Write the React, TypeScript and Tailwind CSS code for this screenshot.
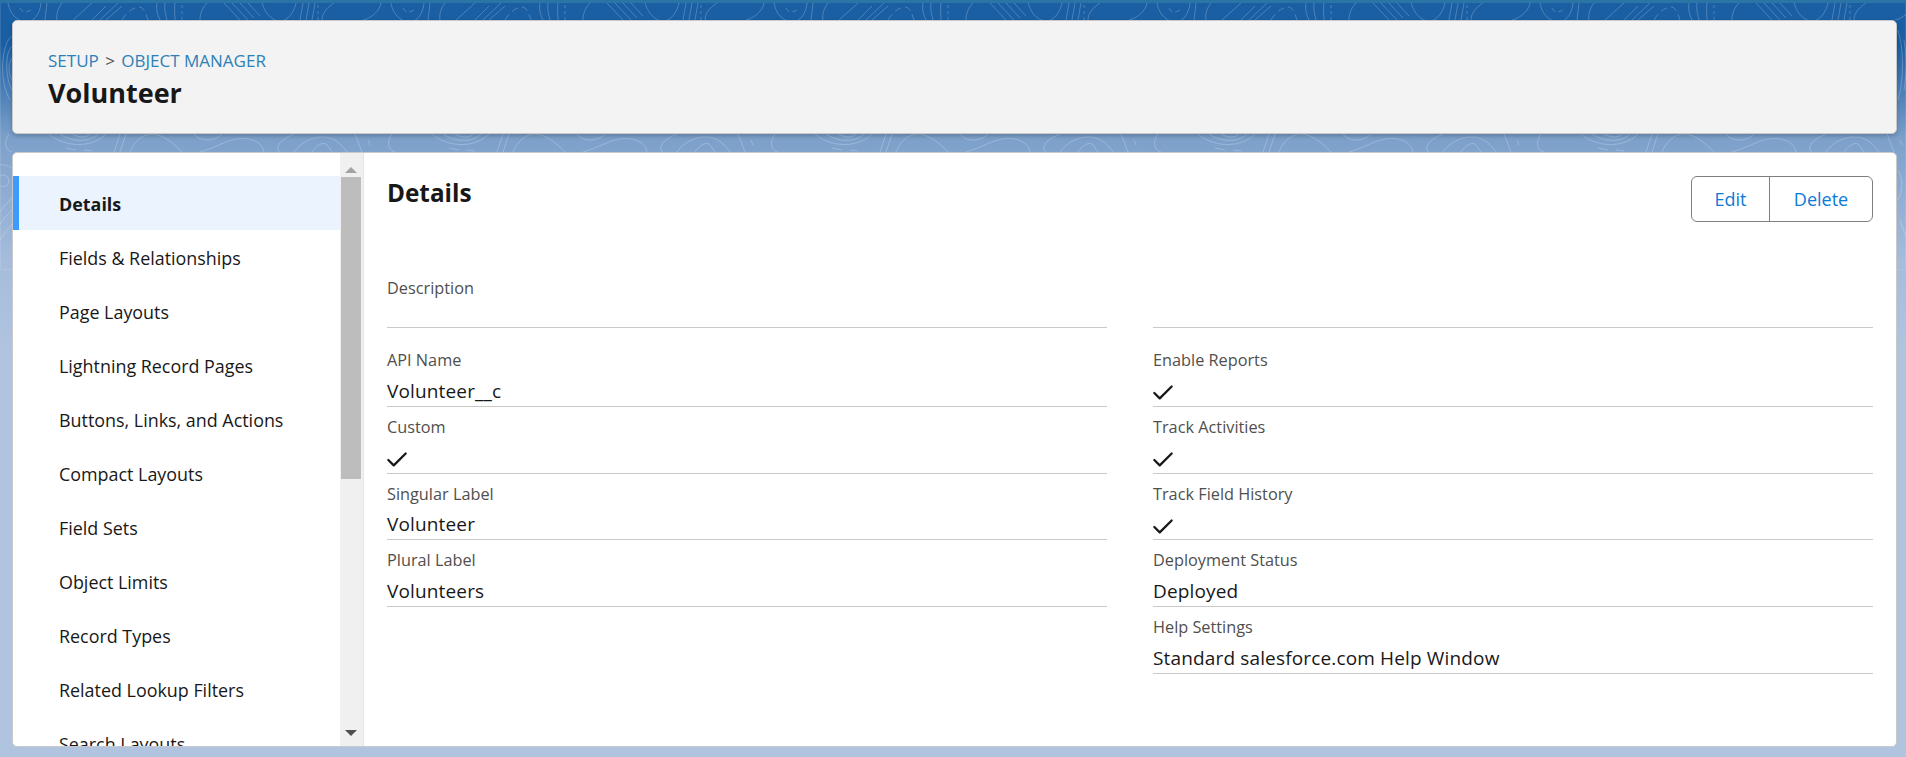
import { Check } from 'lucide-react';

const NAV = [
  'Details',
  'Fields & Relationships',
  'Page Layouts',
  'Lightning Record Pages',
  'Buttons, Links, and Actions',
  'Compact Layouts',
  'Field Sets',
  'Object Limits',
  'Record Types',
  'Related Lookup Filters',
  'Search Layouts',
];

type Row = { label: string; value?: string; check?: boolean };

const LEFT: Row[] = [
  { label: 'API Name', value: 'Volunteer__c' },
  { label: 'Custom', check: true },
  { label: 'Singular Label', value: 'Volunteer' },
  { label: 'Plural Label', value: 'Volunteers' },
];

const RIGHT: Row[] = [
  { label: 'Enable Reports', check: true },
  { label: 'Track Activities', check: true },
  { label: 'Track Field History', check: true },
  { label: 'Deployment Status', value: 'Deployed' },
  { label: 'Help Settings', value: 'Standard salesforce.com Help Window' },
];

function Contours() {
  // topographic texture behind the cards, only seen in the gaps
  return (
    <svg className="absolute left-0 top-0 h-[270px] w-full" fill="none" stroke="#fff" strokeOpacity="0.22" strokeWidth="1">
      <defs>
        <pattern id="topo" width="383" height="270" patternUnits="userSpaceOnUse">
          {/* top strip */}
          <path d="M8 3C10 16 20 22 26 22C34 22 40 14 41 3" />
          <path d="M20 8C22 13 28 13 32 9" strokeDasharray="5 3" />
          <path d="M47 3L45 20M62 3C58 8 56 14 57 20" />
          <path d="M73 20L92 3M92 20L106 6M100 20L118 3M106 20L122 6" />
          <path d="M122 20C128 10 135 7 140 7C144 8 146 14 148 20" strokeDasharray="7 4" />
          <path d="M157 3C156 8 157 14 160 20M165 3C164 10 166 15 167 20M175 3C174 10 175 15 175 20" />
          <path d="M182 5V20" strokeDasharray="3 3" />
          <path d="M207 3C202 8 200 14 200 20" />
          <path d="M224 3L240 20M232 3L248 20M240 3L254 18M248 3L260 16" />
          <path d="M262 3C266 16 274 21 280 21C288 21 294 12 296 3" />
          <path d="M300 20L303 3M306 20L309 3M312 20L315 3" />
          <path d="M318 5V20" strokeDasharray="3 3" />
          <path d="M334 3C326 8 322 14 322 20" />
          <path d="M363 20C372 18 380 10 381 3" />
          {/* second strip */}
          <path d="M49 134C62 146 90 150 106 134M60 134C72 142 88 143 98 134M72 134C80 138 86 138 90 134" />
          <path d="M66 148l10 2M84 150l8 1" />
          <path d="M114 152L120 134M120 152L126 134" />
          <path d="M130 152C134 142 142 134 152 134C164 134 176 146 182 152" />
          <path d="M194 134C200 142 214 142 222 134" />
          <path d="M200 152C214 148 224 142 232 140C246 136 262 140 264 152" />
          <path d="M294 134C284 138 276 144 278 150L280 152" />
          <path d="M294 152C304 138 324 132 338 142C342 146 346 150 347 152" />
          <path d="M312 152C316 146 322 142 326 144C330 148 330 150 332 152" />
          <path d="M355 134L362 152M368 140l2 5" />
          <path d="M9 134C4 140 4 150 12 152" />
          {/* left and right margins */}
          <path d="M12 36C2 42 -2 80 10 100M12 46C4 54 6 80 12 90M12 58C8 64 8 74 12 80" />
          <path d="M0 165C4 164 9 166 12 168M0 176C5 173 9 177 9 182C8 187 3 187 0 186" />
          <path d="M0 212C4 206 8 202 12 198M0 224C4 218 8 214 12 210M0 240C4 234 8 228 12 224" />
          <path d="M366 30C372 50 372 80 366 100M372 40C375 60 375 70 372 90" />
          <path d="M366 170C370 176 372 190 366 200M368 220C370 226 372 232 374 236" />
        </pattern>
      </defs>
      <rect width="100%" height="100%" fill="url(#topo)" />
    </svg>
  );
}

function Field({ row }: { row: Row }) {
  return (
    <div className="flex h-[66.8px] flex-col border-b border-[#c9c9c9] pb-[1px] pt-[10px]">
      <div className="text-[16.3px] leading-[20px] text-[#514f4d]">{row.label}</div>
      <div className="mt-auto flex h-[27px] items-center text-[19px] leading-[27px] tracking-[0.15px] text-[#181818]">
        {row.check ? <Check size={26} strokeWidth={2.1} className="-ml-[3px] mt-[4px] shrink-0" /> : row.value}
      </div>
    </div>
  );
}

export default function App() {
  return (
    <div className="relative h-[757px] w-full overflow-hidden bg-[linear-gradient(#1a5ea3_45px,#7ca0ca_138px,#a5bcdc_260px,#b0c4df_350px)] font-['Open_Sans','Noto_Sans',sans-serif]">
      <Contours />
      <div className="relative h-[3px] bg-[#2a75a5]" />

      <div className="relative flex flex-col gap-[18px] pl-[12px] pr-[9px] pt-[17px]">
        {/* Header */}
        <div className="flex h-[114px] flex-col rounded-[5px] border border-[#c9c9c9] bg-[#f3f3f3] pl-[35px] pt-[28px] shadow-[0_2px_4px_rgba(0,0,0,0.2)]">
          <div className="text-[17px] leading-[24px] text-[#2e7fb8]">
            SETUP <span className="mx-[2px] text-[#514f4d]">&gt;</span> OBJECT MANAGER
          </div>
          <h1 className="mt-[1px] text-[27px] font-bold leading-[38px] text-[#181818]">Volunteer</h1>
        </div>

        {/* Main card */}
        <div className="flex h-[595px] overflow-hidden rounded-[5px] border border-[#c9c9c9] bg-white">
          <nav className="w-[327px] shrink-0 overflow-hidden pt-[23px]">
            {NAV.map((item, i) => (
              <div
                key={item}
                className={
                  i === 0
                    ? 'flex h-[54px] items-center border-l-[6px] border-[#3d9bff] bg-[#ebf4fe] pl-[40px] pt-[3px] text-[17.9px] font-bold text-[#181818]'
                    : 'flex h-[54px] items-center pl-[46px] pt-[3px] text-[17.9px] text-[#181818]'
                }
              >
                {item}
              </div>
            ))}
          </nav>

          {/* Scrollbar */}
          <div className="flex w-[24px] shrink-0 flex-col items-center border-r border-[#e5e5e5] bg-[#f0f0f0] pr-[1px] pt-[14px]">
            <div className="h-0 w-0 border-x-[6px] border-b-[6px] border-x-transparent border-b-[#a3a3a3]" />
            <div className="mt-[4px] h-[302px] w-[20px] bg-[#bdbdbd]" />
            <div className="mb-[10px] mt-auto h-0 w-0 border-x-[6px] border-t-[6px] border-x-transparent border-t-[#505050]" />
          </div>

          {/* Content */}
          <div className="min-w-0 flex-1 pl-[23px] pr-[23px]">
            <div className="flex h-[97px] items-start justify-between pt-[22px]">
              <h2 className="text-[24.3px] font-bold leading-[36px] text-[#181818]">Details</h2>
              <div className="mt-[1px] flex h-[46px] rounded-[6px] border border-[#7f7f7f] text-[18px] text-[#0b7ad8]">
                <button className="w-[78px] border-r border-[#7f7f7f]">Edit</button>
                <button className="w-[102px]">Delete</button>
              </div>
            </div>
            <div className="grid grid-cols-2 gap-x-[46px]">
              <div className="flex flex-col">
                <div className="mb-[12px] h-[78px] border-b border-[#c9c9c9] pt-[28px] text-[16.3px] leading-[20px] text-[#514f4d]">
                  Description
                </div>
                {LEFT.map((row) => (
                  <Field key={row.label} row={row} />
                ))}
              </div>
              <div className="flex flex-col">
                <div className="mb-[12px] h-[78px] border-b border-[#c9c9c9]" />
                {RIGHT.map((row) => (
                  <Field key={row.label} row={row} />
                ))}
              </div>
            </div>
          </div>
        </div>
      </div>
    </div>
  );
}
